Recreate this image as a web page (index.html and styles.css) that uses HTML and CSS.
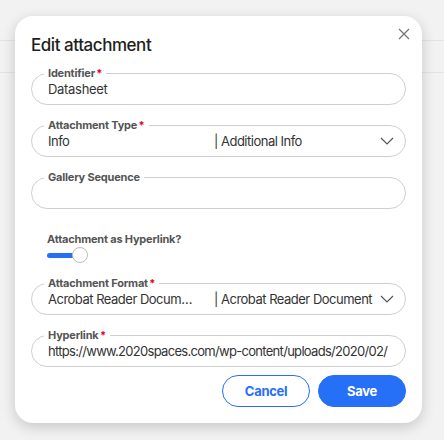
FILE: index.html
```html
<!DOCTYPE html>
<html lang="en">
<head>
  <meta charset="UTF-8">
  <meta name="viewport" content="width=device-width, initial-scale=1.0">
  <title>Edit attachment</title>
  <link rel="stylesheet" href="styles.css">
</head>
<body>
  <div class="page-rows">
    <div class="page-row"></div>
    <div class="page-row"></div>
  </div>

  <div class="dialog">
    <button class="close" type="button" aria-label="Close">
      <svg width="12" height="12" viewBox="0 0 12 12">
        <path d="M1 1 L11 11 M11 1 L1 11" stroke="#777" stroke-width="1.3" fill="none"/>
      </svg>
    </button>

    <h2 class="title">Edit attachment</h2>

    <div class="form">
      <fieldset class="field">
        <legend class="field-label">Identifier <span class="req">*</span></legend>
        <div class="field-value">Datasheet</div>
      </fieldset>

      <fieldset class="field">
        <legend class="field-label">Attachment Type <span class="req">*</span></legend>
        <div class="field-value select">
          <span class="opt-main">Info</span>
          <span class="opt-extra">| Additional Info</span>
          <svg class="chevron" width="14" height="8" viewBox="0 0 14 8">
            <path d="M1 1 L7 7 L13 1" stroke="#555" stroke-width="1.2" fill="none"/>
          </svg>
        </div>
      </fieldset>

      <fieldset class="field">
        <legend class="field-label">Gallery Sequence</legend>
        <div class="field-value"></div>
      </fieldset>

      <div class="switch-group">
        <div class="switch-label">Attachment as Hyperlink?</div>
        <div class="switch">
          <span class="switch-track"></span>
          <span class="switch-knob"></span>
        </div>
      </div>

      <fieldset class="field">
        <legend class="field-label">Attachment Format <span class="req">*</span></legend>
        <div class="field-value select">
          <span class="opt-main">Acrobat Reader Document</span>
          <span class="opt-extra">| Acrobat Reader Document</span>
          <svg class="chevron" width="14" height="8" viewBox="0 0 14 8">
            <path d="M1 1 L7 7 L13 1" stroke="#555" stroke-width="1.2" fill="none"/>
          </svg>
        </div>
      </fieldset>

      <fieldset class="field">
        <legend class="field-label">Hyperlink <span class="req">*</span></legend>
        <div class="field-value url">https://www.2020spaces.com/wp-content/uploads/2020/02/</div>
      </fieldset>
    </div>

    <div class="actions">
      <button class="btn btn-outline" type="button">Cancel</button>
      <button class="btn btn-primary" type="button">Save</button>
    </div>
  </div>
</body>
</html>
```

FILE: styles.css
```css
body {
  margin: 0;
  height: 440px;
  background: #f2f2f2;
  font-family: Inter, "Liberation Sans", sans-serif;
  letter-spacing: -0.3px;
  color: #333;
  position: relative;
  overflow: hidden;
}

/* table rows behind the modal */
.page-rows {
  padding-top: 9px;
}

.page-row {
  height: 31px;
  border-bottom: 1px solid #e3e3e3;
}

.dialog {
  position: absolute;
  left: 15px;
  top: 16px;
  width: 407px;
  height: 407px;
  box-sizing: border-box;
  padding: 19px 16px 16px;
  background: #fff;
  border-radius: 18px;
  box-shadow: 0 4px 14px rgba(0, 0, 0, .18);
  display: flex;
  flex-direction: column;
}

.close {
  position: absolute;
  top: 11px;
  right: 11px;
  width: 14px;
  height: 14px;
  padding: 1px;
  border: 0;
  background: none;
  cursor: pointer;
}

.title {
  margin: 0;
  font-size: 17px;
  line-height: 20px;
  font-weight: 500;
  letter-spacing: -0.45px;
  color: #1e1e1e;
}

.form {
  margin-top: 12px;
  display: flex;
  flex-direction: column;
  gap: 14px;
}

.field {
  margin: 0;
  padding: 0 12px 7px;
  border: 1px solid #cfcfcf;
  border-radius: 16px;
  min-width: 0;
}

.field-label {
  padding: 0 4px;
  font-size: 11px;
  line-height: 12px;
  font-weight: 700;
  letter-spacing: -0.2px;
  color: #555;
}

.req {
  color: #e2001a;
  margin-left: -1px;
}

.field-value {
  height: 16px;
  margin: 2px 0 0 4px;
  font-size: 13px;
  line-height: 16px;
  color: #333;
  white-space: nowrap;
  overflow: hidden;
}

.field-value.url {
  letter-spacing: -0.7px;
}

.select {
  display: grid;
  grid-template-columns: 166px 1fr auto;
  align-items: center;
  letter-spacing: -0.5px;
  overflow: visible;
}

.opt-main {
  padding-right: 16px;
}

.opt-main,
.opt-extra {
  overflow: hidden;
  text-overflow: ellipsis;
}

.chevron {
  margin-right: -1px;
}

.switch-group {
  margin-top: 10px;
  padding-left: 16px;
}

.switch-label {
  font-size: 11px;
  line-height: 12px;
  font-weight: 700;
  letter-spacing: -0.2px;
  color: #555;
}

.switch {
  margin-top: 2px;
  display: flex;
  align-items: center;
  height: 16px;
}

.switch-track {
  width: 28px;
  height: 5px;
  border-radius: 3px;
  background: #2670f8;
}

.switch-knob {
  width: 14px;
  height: 14px;
  margin-left: -3px;
  border: 1px solid #bdbdbd;
  border-radius: 50%;
  background: #fff;
}

.actions {
  margin-top: 8px;
  display: flex;
  justify-content: flex-end;
  gap: 8px;
}

.btn {
  width: 88px;
  height: 32px;
  border-radius: 16px;
  font-family: inherit;
  font-size: 13px;
  font-weight: 700;
  letter-spacing: -0.3px;
  cursor: pointer;
}

.btn-outline {
  border: 1px solid #2670f8;
  background: #fff;
  color: #2670f8;
}

.btn-primary {
  border: 1px solid #2670f8;
  background: #2670f8;
  color: #fff;
}
```
